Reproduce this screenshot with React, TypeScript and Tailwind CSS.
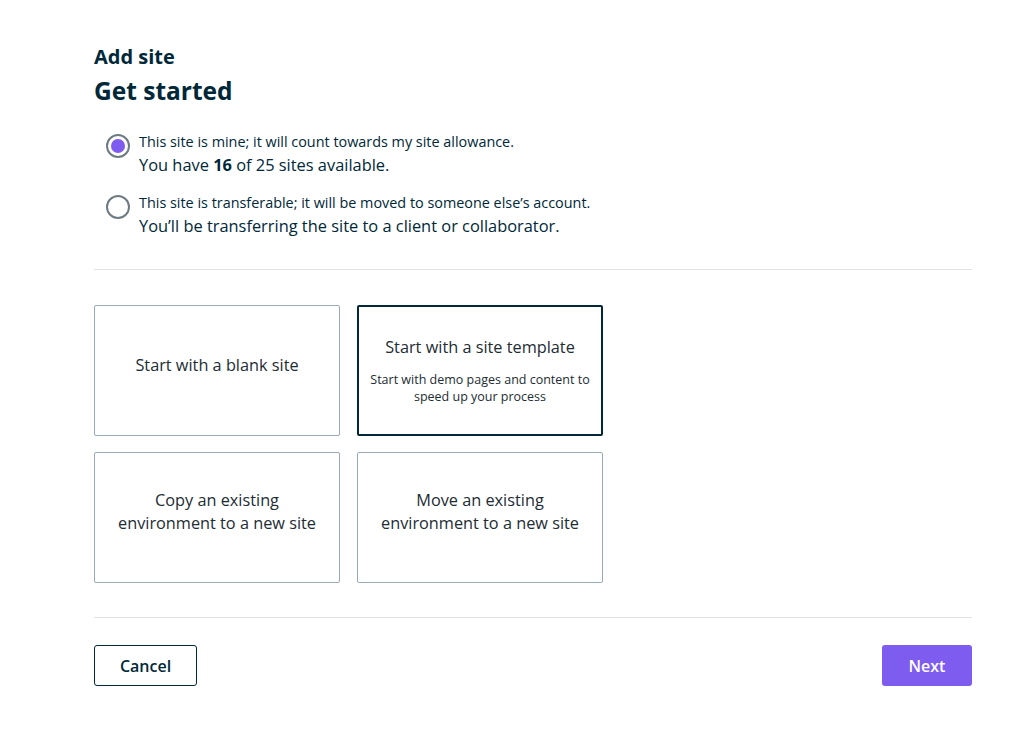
import { useState } from "react"

const options = [
  { id: "mine", label: "This site is mine; it will count towards my site allowance.", detail: "mine" },
  { id: "transfer", label: "This site is transferable; it will be moved to someone else\u2019s account.", detail: "transfer" },
]

const cards = [
  { id: "blank", title: "Start with a blank site" },
  { id: "template", title: "Start with a site template", subtitle: "Start with demo pages and content to speed up your process" },
  { id: "copy", title: "Copy an existing environment to a new site" },
  { id: "move", title: "Move an existing environment to a new site" },
]

const App = () => {
  const [owner, setOwner] = useState("mine")
  const [selected, setSelected] = useState("template")

  return (
    <div className="min-h-[754px] bg-white text-[#002838]" style={{ fontFamily: '"Open Sans", sans-serif' }}>
      <div className="pl-[94px] pr-[52px] pt-[44px]">
        <h2 className="text-[20px] font-bold leading-[26px]">Add site</h2>
        <h1 className="text-[24.5px] font-bold leading-[32px] mt-[5px]">Get started</h1>

        <div className="mt-[26px] pl-[12px] space-y-[17px]">
          {options.map((option) => (
            <label key={option.id} className="flex items-start cursor-pointer" onClick={() => setOwner(option.id)}>
              <span className="mt-[1px] w-[24px] h-[24px] rounded-full border-2 border-[#6f7b83] flex items-center justify-center shrink-0">
                {owner === option.id && <span className="w-[14px] h-[14px] rounded-full bg-[#7e5cef]" />}
              </span>
              <span className="ml-[9px]">
                <span className="block text-[14.4px] leading-[18px]">{option.label}</span>
                <span className="block text-[16.4px] leading-[24px] mt-[2px]">
                  {option.detail === "mine" ? (
                    <>You have <b>16</b> of 25 sites available.</>
                  ) : (
                    "You\u2019ll be transferring the site to a client or collaborator."
                  )}
                </span>
              </span>
            </label>
          ))}
        </div>

        <div className="mt-[31px] border-t border-[#e1e4e6]" />

        <div className="mt-[35px] grid grid-cols-[246px_246px] gap-x-[17px] gap-y-[16px]">
          {cards.map((card) => (
            <button
              key={card.id}
              type="button"
              onClick={() => setSelected(card.id)}
              className={`h-[131px] rounded-[2px] flex flex-col items-center justify-center px-[6px] text-center ${
                selected === card.id ? "border-2 border-[#002838]" : "border border-[#9aabb6]"
              } ${card.subtitle ? "" : "pb-[11px]"}`}
            >
              <span className="max-w-[210px] text-[16.3px] leading-[23px] text-[#222c33]">{card.title}</span>
              {card.subtitle && (
                <span className="mt-[12px] text-[12.5px] leading-[17px] text-[#222c33]">{card.subtitle}</span>
              )}
            </button>
          ))}
        </div>

        <div className="mt-[34px] border-t border-[#e1e4e6]" />

        <div className="mt-[27px] flex justify-between">
          <button type="button" className="w-[103px] h-[41px] rounded-[3px] border border-[#002838] text-[16px] font-semibold">
            Cancel
          </button>
          <button type="button" className="w-[90px] h-[41px] rounded-[3px] bg-[#7e5cef] text-white text-[16px] font-semibold">
            Next
          </button>
        </div>
      </div>
    </div>
  )
}

export default App
